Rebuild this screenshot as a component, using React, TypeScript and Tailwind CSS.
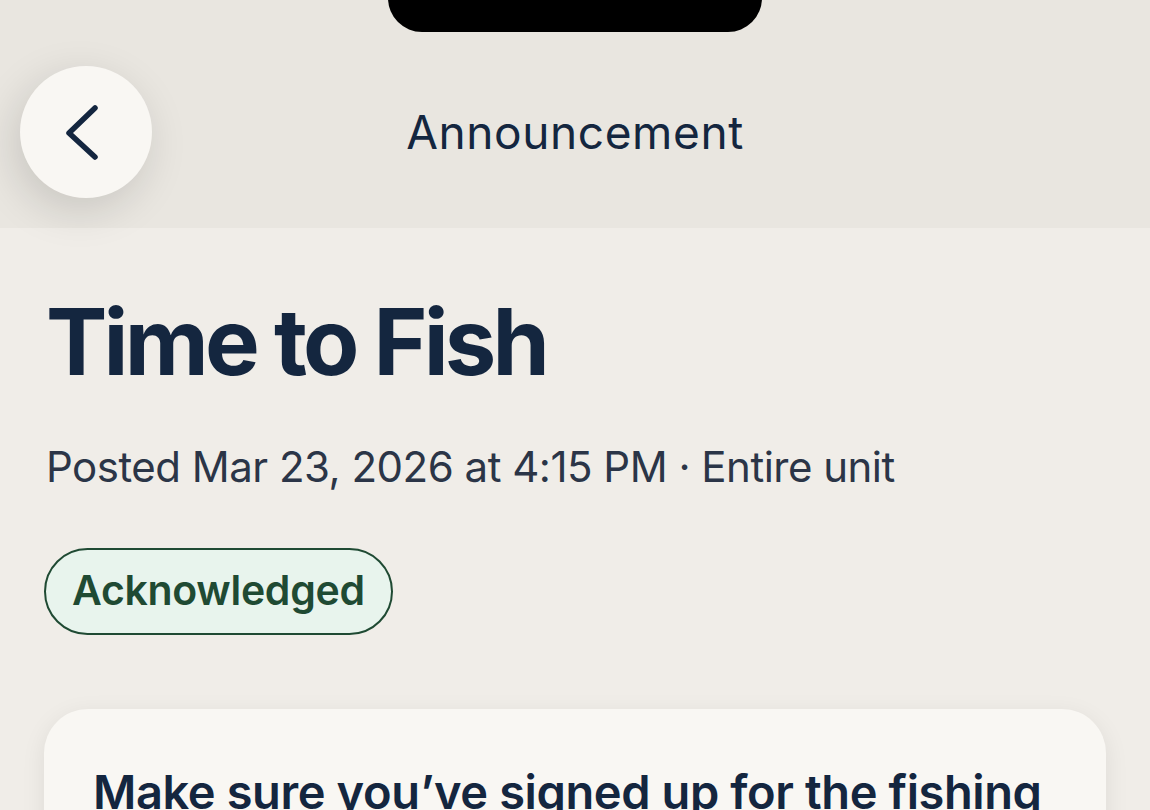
export default function App() {
  return (
    <div
      className="w-[1150px] h-[810px] overflow-hidden bg-[#f0ede8] relative"
      style={{ fontFamily: "Inter, 'Noto Sans', sans-serif" }}
    >
      {/* notch */}
      <div className="absolute left-[388px] top-[-40px] w-[374px] h-[72px] bg-black rounded-[34px]" />

      {/* header */}
      <div className="h-[228px] bg-[#e9e6e0] grid grid-cols-[152px_1fr_152px] items-start pt-[66px]">
        <div className="pl-[20px]">
          <button className="w-[132px] h-[132px] rounded-full bg-[#f9f7f3] flex items-center justify-center shadow-[-6px_12px_44px_rgba(0,0,0,0.14)]">
            <svg width="132" height="132" viewBox="0 0 132 132">
              <path
                d="M75 42 L49 67 L75 91"
                fill="none"
                stroke="#14263f"
                strokeWidth="5.5"
                strokeLinecap="round"
                strokeLinejoin="round"
              />
            </svg>
          </button>
        </div>
        <div className="h-[132px] flex items-center justify-center">
          <span className="text-[46px] text-[#14263f] tracking-[0.6px]">Announcement</span>
        </div>
        <div />
      </div>

      {/* body */}
      <div className="px-[46px] pt-[63px]">
        <h1 className="text-[92px] leading-[1.1] font-bold text-[#14263f] tracking-[-3.8px]">Time to Fish</h1>
        <p className="mt-[50px] text-[42px] leading-[1.2] text-[#2b3547] tracking-[-0.5px]">
          Posted Mar 23, 2026 at 4:15 PM · Entire unit
        </p>
        <div className="mt-[55px] flex -ml-[2px]">
          <span className="h-[87px] px-[26px] rounded-full border-2 border-[#1f4a33] bg-[#e8f4ed] text-[#1f4a33] text-[41px] font-semibold tracking-[-0.3px] flex items-center">
            Acknowledged
          </span>
        </div>
        <div className="mt-[74px] -mx-[2px] bg-[#f9f7f3] rounded-[44px] shadow-[0_6px_24px_rgba(0,0,0,0.08)] px-[49px] pt-[52px] pb-[60px]">
          <p className="text-[47px] leading-[1.3] font-semibold text-[#14263f] tracking-[-0.4px]">
            Make sure you’ve signed up for the fishing trip this weekend so we can plan gear and transport.
          </p>
        </div>
      </div>
    </div>
  );
}
